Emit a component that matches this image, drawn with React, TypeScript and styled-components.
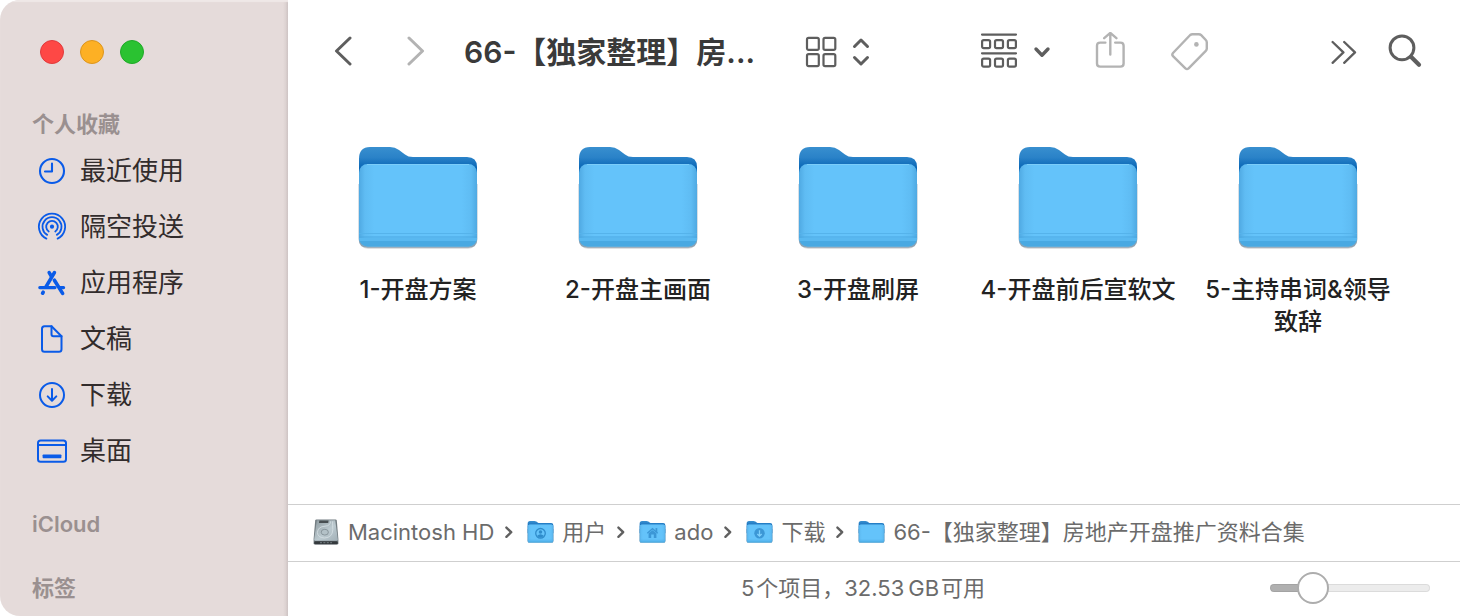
import React, { useState } from 'react';
import styled, { createGlobalStyle } from 'styled-components';

const GlobalStyle = createGlobalStyle`
  *, *::before, *::after { box-sizing: border-box; }
  body {
    margin: 0;
    background: #fff;
    font-family: Inter, "Noto Sans CJK SC", sans-serif;
    -webkit-font-smoothing: antialiased;
  }
`;

const Window = styled.div`
  display: flex;
  min-height: 100vh;
  background: #fff;
  border-radius: 20px 0 0 20px;
  overflow: hidden;
`;

/* ---------- sidebar ---------- */

const Sidebar = styled.aside`
  flex: 0 0 288px;
  padding: 40px 0 0 32px;
  background: linear-gradient(to left, #c9bfbf 0, #dbd1d0 2px, #e5dbda 5px);
  box-shadow: inset 0 2px 1px #efe8e7;
`;

const Lights = styled.div`
  display: flex;
  gap: 16px;
  padding-left: 8px;
  margin-bottom: 44px;
`;

const Light = styled.button<{ $fill: string; $edge: string }>`
  width: 24px;
  height: 24px;
  padding: 0;
  border: 1px solid ${(p) => p.$edge};
  border-radius: 50%;
  background: ${(p) => p.$fill};
`;

const SectionTitle = styled.h2`
  margin: 0;
  height: 32px;
  line-height: 32px;
  font-size: 22px;
  font-weight: 600;
  color: #9a9090;
`;

const Section = styled.section`
  margin-bottom: 32px;
`;

const PlaceList = styled.ul`
  list-style: none;
  margin: 0;
  padding: 3px 0 0;
  display: flex;
  flex-direction: column;
`;

const Place = styled.a`
  display: flex;
  align-items: center;
  gap: 12px;
  height: 56px;
  font-size: 26px;
  line-height: 32px;
  color: #322c2c;
  text-decoration: none;
  svg { width: 32px; height: 32px; margin-left: 4px; color: #0a5be8; }
`;

const Favorites = styled(Section)`
  margin-bottom: 29px;
`;

/* ---------- main column ---------- */

const Main = styled.main`
  flex: 1;
  min-width: 0;
  display: flex;
  flex-direction: column;
`;

const Toolbar = styled.header`
  display: flex;
  align-items: center;
  height: 104px;
  padding: 0 37px 0 44px;
`;

const Cluster = styled.div<{ $gap: number }>`
  display: flex;
  align-items: center;
  gap: ${(p) => p.$gap}px;
`;

const Tools = styled(Cluster)`
  margin-left: auto;
`;

const Overflow = styled(Cluster)`
  margin-left: 121px;
`;

const IconButton = styled.button<{ $muted?: boolean }>`
  display: flex;
  align-items: center;
  gap: 14px;
  padding: 0;
  border: 0;
  background: none;
  color: ${(p) => (p.$muted ? '#b3b3b3' : '#5e5e5e')};
  svg { display: block; }
`;

const Title = styled.h1`
  margin: 0 50px 0 38px;
  font-size: 30px;
  line-height: 40px;
  font-weight: 600;
  color: #3a3a3a;
  white-space: nowrap;
`;

const Files = styled.ul`
  flex: 1;
  list-style: none;
  margin: 0;
  padding: 40px 20px;
  display: grid;
  grid-template-columns: repeat(auto-fill, 220px);
  align-content: start;
`;

const FileLink = styled.a`
  display: flex;
  flex-direction: column;
  align-items: center;
  gap: 22px;
  padding: 0 8px;
  font-size: 24px;
  line-height: 32px;
  font-weight: 500;
  text-align: center;
  color: #222;
  text-decoration: none;
`;

const PathBar = styled.nav`
  display: flex;
  align-items: center;
  height: 57px;
  padding: 0 24px 2px;
  border-top: 1px solid #cfcfcf;
`;

const Crumb = styled.a`
  display: flex;
  align-items: center;
  gap: 8px;
  font-size: 22px;
  line-height: 32px;
  color: #6b6b6b;
  text-decoration: none;
  white-space: nowrap;
`;

const Divider = styled.svg`
  margin: 0 13px 0 10px;
  flex: none;
`;

const StatusBar = styled.footer`
  display: grid;
  grid-template-columns: 160px 1fr 160px;
  align-items: center;
  height: 55px;
  padding: 0 30px 2px 8px;
  border-top: 1px solid #cfcfcf;
`;

const Status = styled.p`
  grid-column: 2;
  margin: 0;
  font-size: 22px;
  line-height: 32px;
  text-align: center;
  color: #6b6b6b;
`;

const Slider = styled.input<{ $fill: number }>`
  appearance: none;
  width: 100%;
  height: 32px;
  margin: 0;
  background: none;
  &::-webkit-slider-runnable-track {
    height: 8px;
    border-radius: 4px;
    box-shadow: inset 0 0 0 1px rgba(0, 0, 0, 0.07);
    background: linear-gradient(to right, #b0b0b0 ${(p) => p.$fill}%, #ececec ${(p) => p.$fill}%);
  }
  &::-webkit-slider-thumb {
    appearance: none;
    width: 32px;
    height: 32px;
    margin-top: -12px;
    border: 2px solid #adadad;
    border-radius: 50%;
    background: #fff;
  }
`;

/* ---------- icons ---------- */

const line = {
  fill: 'none',
  stroke: 'currentColor',
  strokeLinecap: 'round' as const,
  strokeLinejoin: 'round' as const,
};

const ClockIcon = () => (
  <svg viewBox="0 0 32 32" {...line} strokeWidth="2.1">
    <circle cx="16" cy="16" r="12" />
    <path d="M16 8.5V16.5H9" />
  </svg>
);

const AirdropIcon = () => (
  <svg viewBox="0 0 32 32" {...line} strokeWidth="1.8">
    <circle cx="16" cy="15.7" r="2.1" fill="currentColor" stroke="none" />
    <path d="M12.7 20.5A5.8 5.8 0 1 1 19.3 20.5" />
    <path d="M11.2 23.9A9.5 9.5 0 1 1 20.8 23.9" />
    <path d="M10.4 27.6A13.1 13.1 0 1 1 21.6 27.6" />
  </svg>
);

const AppsIcon = () => (
  <svg viewBox="0 0 32 32" {...line} strokeWidth="3.6">
    <path d="M18.4 5.6L9.8 20.2" />
    <path d="M13.2 5.6L15.4 9.2" />
    <path d="M18.4 13.2L26.6 26.4" />
    <path d="M3.8 20.6H19M24.4 20.6H27.6" strokeWidth="3.2" />
    <path d="M6.6 26.2L7.2 25.2" />
  </svg>
);

const DocIcon = () => (
  <svg viewBox="0 0 32 32" {...line} strokeWidth="2">
    <path d="M15.5 3.2H8.5Q6 3.2 6 5.7V26.3Q6 28.8 8.5 28.8H23Q25.5 28.8 25.5 26.3V13.2Z" />
    <path d="M15.5 3.2V11.2Q15.5 13.2 17.5 13.2H25.5" />
  </svg>
);

const DownloadIcon = () => (
  <svg viewBox="0 0 32 32" {...line} strokeWidth="2">
    <circle cx="16" cy="16" r="12" />
    <path d="M16 10V21.5M11.7 17.4L16 21.7L20.3 17.4" />
  </svg>
);

const DesktopIcon = () => (
  <svg viewBox="0 0 32 32" {...line} strokeWidth="2">
    <rect x="2" y="5.4" width="28" height="21.4" rx="2.6" />
    <path d="M2.5 10H29.5" />
    <rect x="6.6" y="19.4" width="18.8" height="3.8" rx="0.8" fill="currentColor" stroke="none" />
  </svg>
);

const Back = () => (
  <svg width="22" height="32" viewBox="0 0 22 32" {...line} strokeWidth="3">
    <path d="M18 2L4.5 15L18 28" />
  </svg>
);

const Forward = () => (
  <svg width="22" height="32" viewBox="0 0 22 32" {...line} strokeWidth="3">
    <path d="M5 2L18.5 15L5 28" />
  </svg>
);

const GridIcon = () => (
  <svg width="32" height="32" viewBox="0 0 32 32" {...line} strokeWidth="2.2">
    {[1.9, 18.1].map((y) =>
      [2, 18.5].map((x) => <rect key={`${x}${y}`} x={x} y={y} width="11.8" height="12" rx="1.6" />),
    )}
  </svg>
);

const UpDownIcon = () => (
  <svg width="20" height="32" viewBox="0 0 20 32" {...line} strokeWidth="3">
    <path d="M3.5 10.5L10 4L16.5 10.5M3.5 21.5L10 28L16.5 21.5" />
  </svg>
);

const GroupIcon = () => (
  <svg width="38" height="38" viewBox="0 0 38 38" {...line} strokeWidth="2.2">
    <path d="M2 1.6H36M2 20.3H36" />
    {[7.1, 25.7].map((y) =>
      [2.1, 15, 27.9].map((x) => <rect key={`${x}${y}`} x={x} y={y} width="8" height="8" rx="1.6" />),
    )}
  </svg>
);

const DownIcon = () => (
  <svg width="20" height="20" viewBox="0 0 20 20" {...line} strokeWidth="3.4">
    <path d="M4 7L10 13.2L16 7" />
  </svg>
);

const ShareIcon = () => (
  <svg width="32" height="40" viewBox="0 0 32 40" {...line} strokeWidth="2.4">
    <path d="M10.4 10.6H5.2Q2 10.6 2 13.8V31.4Q2 34.6 5.2 34.6H25.4Q28.6 34.6 28.6 31.4V13.8Q28.6 10.6 25.4 10.6H20.2" />
    <path d="M15.3 22.6V1.2M9.2 6.2L15.3 0.9L21.4 6.2" />
  </svg>
);

const TagIcon = () => (
  <svg width="40" height="40" viewBox="0 0 40 40" {...line} strokeWidth="2.4">
    <path d="M20.2 3Q21.2 2.2 22.4 2.2H28.8Q30.2 2.2 31.2 3.2L35.8 8Q36.8 9 36.8 10.4V16.4Q36.8 17.8 35.8 18.8L18.6 36.4Q17 37.8 15.4 36.4L3 24.2Q1.6 22.6 3 21Z" />
    <circle cx="26.4" cy="12.4" r="2.3" fill="currentColor" stroke="none" />
  </svg>
);

const MoreIcon = () => (
  <svg width="26" height="24" viewBox="0 0 26 24" {...line} strokeWidth="2.3">
    <path d="M1.6 2L12.4 12.4L1.6 22.8M13.2 2L24 12.4L13.2 22.8" />
  </svg>
);

const SearchIcon = () => (
  <svg width="36" height="36" viewBox="0 0 36 36" {...line} strokeWidth="3">
    <circle cx="15" cy="13.8" r="11.9" />
    <path d="M24 22.8L32 30.8" strokeWidth="4.2" />
  </svg>
);

type Badge = 'user' | 'home' | 'download';

const badges: Record<Badge, React.ReactNode> = {
  user: (
    <g>
      <circle cx="62" cy="60" r="22" fill="none" stroke="#2f8ccb" strokeWidth="6" />
      <circle cx="62" cy="54" r="8" fill="#2f8ccb" />
      <path d="M47 71Q62 57 77 71Q70 80 62 80Q54 80 47 71Z" fill="#2f8ccb" />
    </g>
  ),
  home: (
    <g>
      <path d="M38 60L62 39L86 60" fill="none" stroke="#3c97d6" strokeWidth="6" />
      <path d="M76 36H84V54H76Z" fill="#3c97d6" />
      <path d="M44 60L62 46L80 60V82H68V66H56V82H44Z" fill="#3c97d6" />
    </g>
  ),
  download: (
    <g>
      <circle cx="62" cy="60" r="24" fill="#3c97d6" />
      <path d="M62 46V72M52 63L62 73L72 63" fill="none" stroke="#7fd0fc" strokeWidth="6" />
    </g>
  ),
};

const BackPanel = 'M3 15Q3 3 14 3H34Q39 3 43 6L49 10.5Q52 13 57 13H111Q121 13 121 23V60H3Z';

const Folder = ({ width, height, id, badge }: { width: number; height: number; id: string; badge?: Badge }) => (
  <svg width={width} height={height} viewBox="0 0 124 108">
    <defs>
      <linearGradient id={`${id}-back`} x1="0" y1="3" x2="0" y2="24" gradientUnits="userSpaceOnUse">
        <stop offset="0" stopColor="#388fcf" />
        <stop offset="0.5" stopColor="#2a82c8" />
        <stop offset="1" stopColor="#0865b5" />
      </linearGradient>
      <linearGradient id={`${id}-side`} x1="0" x2="1" y1="0" y2="0">
        <stop offset="0" stopColor="#4fa9e2" />
        <stop offset="0.05" stopColor="#5fbcf3" />
        <stop offset="0.13" stopColor="#64c3fa" />
        <stop offset="0.87" stopColor="#64c3fa" />
        <stop offset="0.95" stopColor="#5fbcf3" />
        <stop offset="1" stopColor="#4fa9e2" />
      </linearGradient>
      <clipPath id={`${id}-clip`}>
        <rect x="3" y="20" width="118" height="82.5" rx="8.5" />
      </clipPath>
    </defs>
    <rect x="3" y="60" width="118" height="45" rx="9" fill="#000" opacity="0.12" />
    <path d="M2.6 40H121.4V94.8Q121.4 103.8 112.4 103.8H11.6Q2.6 103.8 2.6 94.8Z" fill="#49708c" opacity="0.55" />
    <path d={BackPanel} fill={`url(#${id}-back)`} />
    <rect x="3" y="20" width="118" height="82.5" rx="8.5" fill={`url(#${id}-side)`} />
    <g clipPath={`url(#${id}-clip)`}>
      <path d="M3 89.5H121" stroke="#55b3eb" />
      <path d="M3 93H121" stroke="#4aa8e2" strokeWidth="1.2" />
      <rect x="3" y="94" width="118" height="3" fill="#59b8f0" />
      <rect x="3" y="97" width="118" height="6" fill="#49a9e2" />
    </g>
    <path d="M11 20.5H113" stroke="#7bcdfa" />
    {badge && badges[badge]}
  </svg>
);

const DiskIcon = () => (
  <svg width="28" height="28" viewBox="0 0 28 28">
    <defs>
      <linearGradient id="disk" x1="0" y1="0" x2="1" y2="1">
        <stop offset="0" stopColor="#8d999e" />
        <stop offset="0.55" stopColor="#bccad0" />
        <stop offset="1" stopColor="#a2b0b7" />
      </linearGradient>
    </defs>
    <path d="M4.4 1.5H23.6Q24.6 1.5 24.8 2.5L26.4 21V25.2Q26.4 26.6 25 26.6H3Q1.6 26.6 1.6 25.2V21L3.2 2.5Q3.4 1.5 4.4 1.5Z" fill="#737d82" />
    <path d="M4.8 2.2H23.2L25.8 21.6Q25.8 22.8 24.6 22.8H3.4Q2.2 22.8 2.2 21.6Z" fill="url(#disk)" />
    <path d="M7.4 2.4H16.6L16.2 5H7Z" fill="#474e51" />
    <path d="M20.6 3.4Q20.4 7 20.8 11.6Q20.6 19.6 12.4 20Q5.6 19.6 5.4 14.4Q6 8.6 13 8.2Q18.4 7.8 18.6 3.4" fill="none" stroke="#d3dde1" strokeWidth="0.9" />
    <ellipse cx="12.8" cy="14.2" rx="3.6" ry="2.9" fill="#b3c1c7" stroke="#7d8a90" strokeWidth="0.8" />
    <rect x="2.2" y="23.2" width="23.6" height="3" rx="1.2" fill="#34393c" />
    <path d="M8 24.7H20" stroke="#747e83" strokeWidth="1" strokeDasharray="2 1.4" />
  </svg>
);

/* ---------- data ---------- */

const places = [
  { label: '最近使用', icon: <ClockIcon /> },
  { label: '隔空投送', icon: <AirdropIcon /> },
  { label: '应用程序', icon: <AppsIcon /> },
  { label: '文稿', icon: <DocIcon /> },
  { label: '下载', icon: <DownloadIcon /> },
  { label: '桌面', icon: <DesktopIcon /> },
];

const folders = ['1-开盘方案', '2-开盘主画面', '3-开盘刷屏', '4-开盘前后宣软文', '5-主持串词&领导致辞'];

const crumbs: { label: string; disk?: boolean; badge?: Badge }[] = [
  { label: 'Macintosh HD', disk: true },
  { label: '用户', badge: 'user' },
  { label: 'ado', badge: 'home' },
  { label: '下载', badge: 'download' },
  { label: '66-【独家整理】房地产开盘推广资料合集' },
];

export default function App() {
  const [size, setSize] = useState(21);

  return (
    <>
      <GlobalStyle />
      <Window lang="zh-CN">
        <Sidebar>
          <Lights>
            <Light $fill="#fe4845" $edge="#e03a3c" aria-label="关闭" />
            <Light $fill="#fdb024" $edge="#dc951d" aria-label="最小化" />
            <Light $fill="#2ac231" $edge="#1fa927" aria-label="缩放" />
          </Lights>
          <Favorites>
            <SectionTitle>个人收藏</SectionTitle>
            <PlaceList>
              {places.map((p) => (
                <li key={p.label}>
                  <Place href="#">
                    {p.icon}
                    {p.label}
                  </Place>
                </li>
              ))}
            </PlaceList>
          </Favorites>
          <Section>
            <SectionTitle>iCloud</SectionTitle>
          </Section>
          <SectionTitle>标签</SectionTitle>
        </Sidebar>
        <Main>
          <Toolbar>
            <Cluster $gap={50}>
              <IconButton aria-label="后退"><Back /></IconButton>
              <IconButton $muted aria-label="前进"><Forward /></IconButton>
            </Cluster>
            <Title>66-【独家整理】房...</Title>
            <IconButton aria-label="显示方式">
              <GridIcon />
              <UpDownIcon />
            </IconButton>
            <Tools $gap={43}>
              <IconButton aria-label="分组">
                <GroupIcon />
                <DownIcon />
              </IconButton>
              <IconButton $muted aria-label="共享"><ShareIcon /></IconButton>
              <IconButton $muted aria-label="标签"><TagIcon /></IconButton>
            </Tools>
            <Overflow $gap={30}>
              <IconButton aria-label="更多"><MoreIcon /></IconButton>
              <IconButton aria-label="搜索"><SearchIcon /></IconButton>
            </Overflow>
          </Toolbar>
          <Files>
            {folders.map((name, i) => (
              <li key={name}>
                <FileLink href="#">
                  <Folder id={`file${i}`} width={124} height={108} />
                  {name}
                </FileLink>
              </li>
            ))}
          </Files>
          <PathBar aria-label="路径">
            {crumbs.map((c, i) => (
              <React.Fragment key={c.label}>
                {i > 0 && (
                  <Divider width="10" height="14" viewBox="0 0 10 14" {...line} stroke="#606060" strokeWidth="2.4">
                    <path d="M2.4 2.6L7.2 7.2L2.4 11.8" />
                  </Divider>
                )}
                <Crumb href="#">
                  {c.disk ? <DiskIcon /> : <Folder id={`crumb${i}`} width={27} height={24} badge={c.badge} />}
                  {c.label}
                </Crumb>
              </React.Fragment>
            ))}
          </PathBar>
          <StatusBar>
            <Status>5&#8202;个项目，32.53&#8201;GB&#8202;可用</Status>
            <Slider
              type="range"
              aria-label="图标大小"
              min={0}
              max={100}
              value={size}
              $fill={10 + size * 0.8}
              onChange={(e) => setSize(Number(e.target.value))}
            />
          </StatusBar>
        </Main>
      </Window>
    </>
  );
}
